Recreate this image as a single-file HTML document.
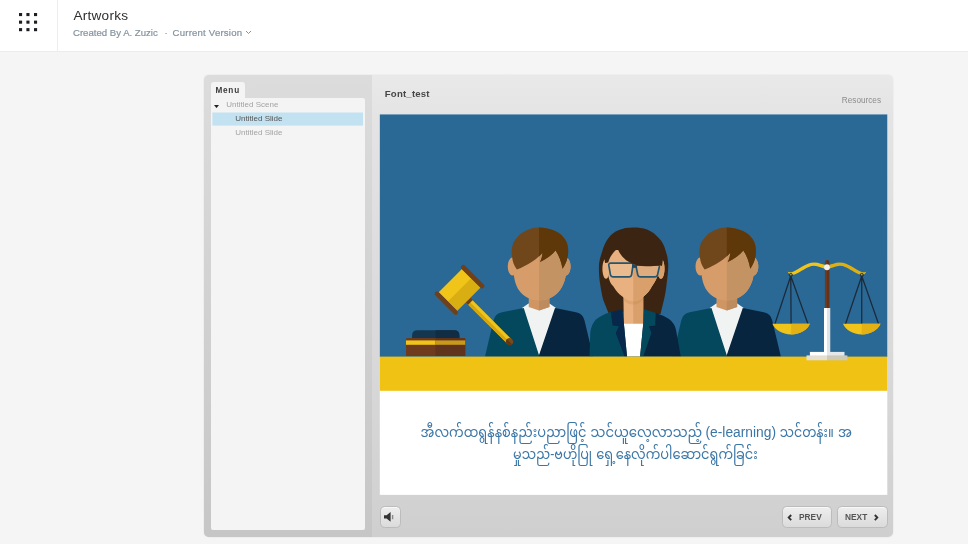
<!DOCTYPE html>
<html lang="en">
<head>
<meta charset="utf-8">
<title>Artworks</title>
<style>
html,body{margin:0;padding:0}
body{width:968px;height:544px;overflow:hidden;background:#f5f5f5;font-family:"Liberation Sans",sans-serif;position:relative}
.abs{position:absolute}
#page{position:absolute;left:0;top:0;width:968px;height:544px;will-change:transform}
#hdr{position:absolute;left:0;top:0;width:968px;height:51px;background:#fff;border-bottom:1px solid #ececec}
#apps{position:absolute;left:0;top:0;width:57px;height:51px;border-right:1px solid #eeeeee}
#title{position:absolute;left:73.4px;top:7.7px;font-size:13.6px;letter-spacing:.25px;line-height:16px;color:#2e2e2e;white-space:nowrap}
.sub{position:absolute;top:27.1px;font-size:9.6px;line-height:12px;color:#8493a0;white-space:nowrap;-webkit-text-stroke:.2px #8493a0}
#frame{position:absolute;left:203.8px;top:74.9px;width:689.7px;height:461.7px;border-radius:5px;box-shadow:0 0 1.5px rgba(0,0,0,.14);background:linear-gradient(#e9e9e9,#e4e4e4 40px,#d2d2d2 420px,#cfcfcf);overflow:hidden}
#side{position:absolute;left:0;top:0;width:168px;height:462px;background:linear-gradient(#dcdcdc,#c6c6c6)}
#tab{position:absolute;left:7px;top:7px;width:34px;height:18px;border-radius:3px 3px 0 0;background:#f4f4f4}
#tab b{position:absolute;left:4.6px;top:3.2px;font-size:8.2px;line-height:11px;color:#3a3a3a;letter-spacing:.8px}
#panel{position:absolute;left:7px;top:23.5px;width:154.5px;height:432px;background:#f4f4f4;border-radius:0 2px 2px 2px}
.mi{position:absolute;font-size:8px;line-height:10px;color:#a3a3a3;white-space:nowrap}
#ptitle{position:absolute;left:181px;top:13.2px;font-size:9.6px;letter-spacing:.2px;line-height:12px;font-weight:bold;color:#474747;white-space:nowrap}
#res{position:absolute;right:12.5px;top:21.2px;font-size:8.2px;line-height:10px;color:#8c8c8c;white-space:nowrap}
#slide{position:absolute;left:175.20px;top:39.10px;width:509px;height:381px;overflow:hidden}
.btn{position:absolute;top:431.1px;height:19.6px;border:1px solid #bcbcbc;border-radius:4.5px;background:linear-gradient(#eeeeee,#dbdbdb);box-shadow:inset 0 1px 0 #f8f8f8;font-size:8.5px;line-height:19.6px;color:#555;font-weight:bold;white-space:nowrap}
.bt{top:.7px;transform:scale(.98,1.12);transform-origin:0 60%}
</style>
</head>
<body>
<div id="page">
<div id="hdr">
  <div id="apps"><svg class="abs" style="left:0;top:0" width="57" height="51" viewBox="0 0 57 51" fill="#1b1f23"><rect x="19" y="13" width="3.1" height="3.1"/><rect x="26.4" y="13" width="3.1" height="3.1"/><rect x="34" y="13" width="3.1" height="3.1"/><rect x="19" y="20.6" width="3.1" height="3.1"/><rect x="26.4" y="20.6" width="3.1" height="3.1"/><rect x="34" y="20.6" width="3.1" height="3.1"/><rect x="19" y="28.1" width="3.1" height="3.1"/><rect x="26.4" y="28.1" width="3.1" height="3.1"/><rect x="34" y="28.1" width="3.1" height="3.1"/></svg></div>
  <div id="title">Artworks</div>
  <div class="sub" style="left:73px">Created By A. Zuzic</div>
  <div class="sub" style="left:164.6px">·</div>
  <div class="sub" style="left:172.6px;letter-spacing:.2px">Current Version</div>
  <svg class="abs" style="left:245px;top:30px" width="7" height="5" viewBox="0 0 7 5"><path d="M1 1l2.5 2.5L6 1" fill="none" stroke="#8493a0" stroke-width="1"/></svg>
</div>
<div id="frame">
  <div id="side">
    <div id="tab"><b>Menu</b></div>
    <div id="panel">
      <svg class="abs" style="left:3px;top:6.3px" width="5" height="3.2" viewBox="0 0 5 3"><path d="M0 0h5L2.5 3z" fill="#222"/></svg>
      <div class="mi" style="left:15.5px;top:1.9px">Untitled Scene</div>
      <svg class="abs" style="left:0;top:13px" width="155" height="16" viewBox="0 0 155 16"><rect x="1.4" y="1.5" width="150.6" height="13.1" fill="#c2e2f1"/></svg>
      <div class="mi" style="left:24.5px;top:16px;color:#555">Untitled Slide</div>
      <div class="mi" style="left:24.5px;top:30px">Untitled Slide</div>
    </div>
  </div>
  <div id="ptitle">Font_test</div>
  <div id="res">Resources</div>
  <div id="slide">
<svg class="abs" style="left:0;top:0" width="509" height="381" viewBox="379 114 509 381">
<defs>
<path id="mHair" d="M516.9 269.4C514 266 512.4 261 512.2 257.5C511.6 253 511.5 251 511.9 248.8C512.5 244 514 241 516.3 238.5C519 235 522 232.5 526.3 230.6C530 228.6 534 227.5 539 227.5C544 227.5 548.5 228.4 552.5 230C557 231.7 560 233.5 562.5 236.3C566 240 567.8 244 568.1 248.8C568.3 252 568.1 255 567.5 257.5C566.5 262 564.8 265.5 562.5 268.8C561.5 262 559 255.5 555.6 250.6C552 255 546.5 259 540 261.9C541.5 259 542.3 256 542.5 252.8C538.5 258 527 266 516.9 269.4Z"/>
<path id="mFace" d="M512.6 248L513.3 270C514 280 516 286 518.8 290C523 296 530 300.5 539 300.5C548 300.5 555.5 296 560 290C563.5 285 565.8 279 566.4 270L567.2 248Z"/>
<path id="mEars" d="M512.5 257.5a4.75 9 0 1 0 .01 0ZM565.8 257.5a4.75 9 0 1 0 .01 0Z"/>
<path id="mNeck" d="M528.75 294H549.4V307L539 310.6L528.75 307Z"/>
<path id="mShirt" d="M522 308L528.5 303.5H549.5L556 308L539 356.6Z"/>
<path id="mJkL" d="M523.75 308.1L502 312.3Q495 313.8 493.5 320.5L485 356.6H539.3L539 355.2Z"/>
<path id="mJkR" d="M555 308.1L576 312.3Q583 313.8 584.5 320.5L593.1 356.6H538.7L539 355.2Z"/>
<clipPath id="cM"><rect x="539" y="200" width="60" height="200"/></clipPath>
<g id="man">
<use href="#mEars" fill="#d69d6a"/><use href="#mEars" fill="#c49364" clip-path="url(#cM)"/>
<use href="#mShirt" fill="#f1f2f2"/>
<use href="#mJkL" fill="#04485e"/><use href="#mJkR" fill="#07253f"/>
<use href="#mNeck" fill="#cf9563"/><use href="#mNeck" fill="#bd8b5e" clip-path="url(#cM)"/>
<use href="#mFace" fill="#d69d6a"/><use href="#mFace" fill="#c49364" clip-path="url(#cM)"/>
<use href="#mHair" fill="#70461b"/><use href="#mHair" fill="#5f380a" clip-path="url(#cM)"/>
</g>
<clipPath id="cW"><rect x="633.25" y="200" width="60" height="200"/></clipPath>
<path id="wFace" d="M608 250V272C608.5 279 610 283 613.25 286.25C616 291 619 294 622 296.25C626 299.5 629 301.25 633.25 301.25C637.5 301.25 640.5 299.5 643.9 296.25C647.5 293.5 650 290 652 286.25C655 282 657.5 278 658.3 272V250Z"/>
<path id="wNeck" d="M623.25 290H643.25V324H623.9Z"/>
<path id="wEars" d="M606 258.75a3.6 10 0 1 0 .01 0ZM660.9 258.75a3.6 10 0 1 0 .01 0Z"/>
<path id="pan" d="M0 0H37.5C35 6 28 10.65 18.75 10.65C9.5 10.65 2.5 6 0 0Z"/>
<path id="beamL" d="M787.6 271.8C789 272.5 791 272.4 793 271.7C800 269.2 806 262.6 814.3 262.6C819 262.6 822.5 264.9 827 265.3V268.9C822 268.7 818.5 265.8 814 265.8C807 265.9 801 272.6 794.5 274.4C792 275 790.5 274.9 789.5 274.3Z"/>
</defs>
<rect x="379.8" y="114.4" width="507.50" height="380.45" fill="#fff"/>
<rect x="379.8" y="114.4" width="507.50" height="242.60" fill="#2a6896"/>
<path d="M412.1 338.5V335.5Q412.1 330.25 417.5 330.25H454Q459.4 330.25 459.4 335.5V338.5Z" fill="#14364f"/>
<path d="M435.6 338.5V330.25H454Q459.4 330.25 459.4 335.5V338.5Z" fill="#102d44"/>
<path d="M406 355.9V339.3Q406 338.1 407.2 338.1H464Q465.25 338.1 465.25 339.3V355.9Z" fill="#6e3b1e"/>
<path d="M435.6 355.9V338.1H464Q465.25 338.1 465.25 339.3V355.9Z" fill="#5f331c"/>
<rect x="406" y="340.4" width="29.6" height="4.4" fill="#f0c419"/><rect x="435.6" y="340.4" width="29.65" height="4.4" fill="#c99a1a"/>
<use href="#man"/>
<use href="#man" x="187.75"/>
<g transform="translate(459.5 289.9) rotate(135)">
<rect x="-1.9" y="-72" width="6.2" height="60" fill="#f0c419"/><rect x="1.3" y="-72" width="3" height="60" fill="#d4a711"/>
<rect x="-2.2" y="-16.6" width="6.8" height="3.6" fill="#70401a"/>
<ellipse cx="1.2" cy="-72" rx="3.4" ry="3.6" fill="#7a4a18"/><path d="M1.2 -75.6a3.4 3.6 0 0 1 0 7.2Z" fill="#633812"/>
<rect x="-16.4" y="-13" width="32.8" height="26" fill="#f0c419"/><rect x="-16.4" y="-13" width="32.8" height="13" fill="#d9ae13"/>
<rect x="-21" y="-15.6" width="4.7" height="31.2" rx="2.2" fill="#70401a"/><rect x="16.3" y="-15.6" width="4.7" height="31.2" rx="2.2" fill="#70401a"/>
</g>
<path d="M633.25 227.5C627.5 227.5 623 228.3 619 230C614 232 611 234.5 608.5 238C605.5 242 603.5 246.5 602 252C600 258 598.9 262 598.9 267C598.9 274 599.3 279 600.1 283.75C601 290 602 295 603.25 300L608.9 314H660.5L663.9 300C665.2 295 666 290 666.6 283.75C667.6 277 668.25 271 668.25 265C668 259 667.2 255 665.75 251.25C664.5 246 662.5 242 659.5 238.75C656 234.5 652 231.5 647 229.4C643 228 638.5 227.5 633.25 227.5Z" fill="#3b2512"/>
<use href="#wEars" fill="#e9b180"/><use href="#wEars" fill="#d9a06c" clip-path="url(#cW)"/>
<path d="M610.75 311.9Q600 315.5 596 319.5Q591.5 324 590.3 332L589.5 356.6H633V312Z" fill="#04485e"/>
<path d="M655.75 313.1Q664 315.8 669 319Q674.5 323 676 330L680.75 356.6H633V313Z" fill="#07253f"/>
<use href="#wNeck" fill="#e9b180"/><use href="#wNeck" fill="#d9a06c" clip-path="url(#cW)"/>
<clipPath id="cN"><use href="#wNeck"/></clipPath><use href="#wFace" y="3.2" fill="#b9732f" opacity=".18" clip-path="url(#cN)"/>
<use href="#wFace" fill="#e9b180"/><use href="#wFace" fill="#d9a06c" clip-path="url(#cW)"/>
<g fill="#fff" fill-opacity=".13" stroke="#25566e" stroke-width="1.7"><path d="M610.6 263.2H631.2Q633.2 263.2 633 265.2L631.6 274.6Q631.2 276.9 629 276.9H613.2Q611 276.9 610.4 274.6L608.8 265.2Q608.6 263.2 610.6 263.2Z"/><path d="M638 264.9H657.6Q659.6 264.9 659.3 266.9L657.6 274.6Q657 276.9 654.8 276.9H640.4Q638.2 276.9 637.7 274.6L636.2 266.9Q636 264.9 638 264.9Z"/></g>
<path d="M632 264.4H637V267.9H632Z" fill="#1d4a62"/>
<path d="M605 263L608.25 262.6C609.5 257.5 613 252 617.6 248.75C620 254.5 624 259.5 630 262.5C635 265.4 641 266.3 647 266.2C652 266.1 656 265.8 659.5 265.2L662 266L664 252L655 238H612L603.5 250Z" fill="#3b2512"/>
<path d="M623.9 323.75H643.25L640.1 356.6H627Z" fill="#fff"/>
<path d="M620.75 309.4L610.75 312.3L612.6 325.6L618.9 326.25L615.75 333.1L624.5 356.6H627L623.9 323.75L622.2 309.6Z" fill="#07284a"/>
<path d="M645.1 309.4L655.75 313.1L655.1 325.6L648.9 326.25L651.4 333.1L643.25 356.6H640.1L643.25 323.75L644 309.6Z" fill="#04485e"/>
<path d="M790.75 276L774.9 324M790.75 276L791.1 324M790.75 276L808 324M861.75 276L845.5 324M861.75 276V324M861.75 276L878.6 324" stroke="#1b2a38" stroke-width="1.25" fill="none"/>
<use href="#beamL" fill="#f0c419"/><use href="#beamL" fill="#dcb015" transform="translate(1654 0) scale(-1 1)"/>
<g stroke="#1b2a38" stroke-width=".9" fill="none"><circle cx="790.75" cy="275" r="1.6"/><circle cx="861.75" cy="275" r="1.6"/></g>
<path d="M824.9 308V263Q824.9 260 827 260Q829.25 260 829.25 263V308Z" fill="#70391c"/><path d="M827 308V260Q829.25 260 829.25 263V308Z" fill="#62321b"/>
<circle cx="827" cy="267.25" r="2.9" fill="#f2f2f2"/>
<rect x="824" y="308" width="3" height="44" fill="#fff"/><rect x="827" y="308" width="3.25" height="44" fill="#e2e3e4"/>
<rect x="809.9" y="351.9" width="17.2" height="4.2" fill="#fff"/><rect x="827" y="351.9" width="17.5" height="4.2" fill="#e6e7e8"/>
<use href="#pan" x="772.4" y="323.75" fill="#f0c419"/><path d="M791.15 323.75H809.9C807.4 329.75 800.4 334.4 791.15 334.4Z" fill="#e3b113"/>
<use href="#pan" x="843" y="323.75" fill="#f0c419"/><path d="M861.75 323.75H880.5C878 329.75 871 334.4 861.75 334.4Z" fill="#e3b113"/>
<rect x="379.8" y="356.6" width="507.50" height="34.2" fill="#f0c213"/>
<rect x="806.5" y="355.4" width="20.6" height="4.9" fill="#e4e0d1"/><rect x="827" y="355.4" width="20.4" height="4.9" fill="#cecab8"/>
</svg>
<svg class="abs" style="left:0;top:0" width="509" height="381" viewBox="0 0 509 381" fill="#3a76a6" role="img" aria-label="slide text">
<g font-family="'Noto Sans Myanmar', 'Padauk', 'Myanmar Text', sans-serif" font-size="13.8">
<text x="41.5" y="322.9" textLength="166" lengthAdjust="spacingAndGlyphs">အီလက်ထရွန်နစ်နည်းပညာဖြင့်</text>
<text x="211.6" y="322.9" textLength="111.5" lengthAdjust="spacingAndGlyphs">သင်ယူလေ့လာသည့်</text>
<text x="400.75" y="322.9" textLength="54" lengthAdjust="spacingAndGlyphs">သင်တန်း။</text>
<text x="459.1" y="322.9" textLength="14" lengthAdjust="spacingAndGlyphs">အ</text>
<text x="134.1" y="344.75" textLength="79" lengthAdjust="spacingAndGlyphs">မှုသည်-ဗဟိုပြု</text>
<text x="217.25" y="344.75" textLength="161.5" lengthAdjust="spacingAndGlyphs">ရှေ့နေလိုက်ပါဆောင်ရွက်ခြင်း</text>
</g>
<text x="326.5" y="322.5" font-family="Liberation Sans, sans-serif" font-size="13.8">(e-learning)</text>
</svg>
  </div>
  <div class="btn" id="vol" style="left:176.3px;width:19px"><svg class="abs" style="left:2.7px;top:4.8px" width="10" height="10" viewBox="0 0 10 10"><path d="M0 3.2h2.6L6.6 0v9.7L2.6 6.5H0z" fill="#333"/><rect x="7.9" y="3" width="1.4" height="4.2" fill="#8a8a8a"/></svg></div>
  <div class="btn" id="prev" style="left:578.5px;width:47.8px"><svg class="abs" style="left:3.8px;top:7.2px" width="6" height="7" viewBox="0 0 6 7"><path d="M4.2 1L1.7 3.6 4.2 6.2" fill="none" stroke="#333" stroke-width="1.9"/></svg><span class="abs bt" style="left:15.4px">PREV</span></div>
  <div class="btn" id="next" style="left:633.2px;width:48.6px"><span class="abs bt" style="left:7.2px">NEXT</span><svg class="abs" style="left:35.4px;top:7.2px" width="6" height="7" viewBox="0 0 6 7"><path d="M1.8 1L4.3 3.6 1.8 6.2" fill="none" stroke="#333" stroke-width="1.9"/></svg></div>
</div>
</div>
</body>
</html>
